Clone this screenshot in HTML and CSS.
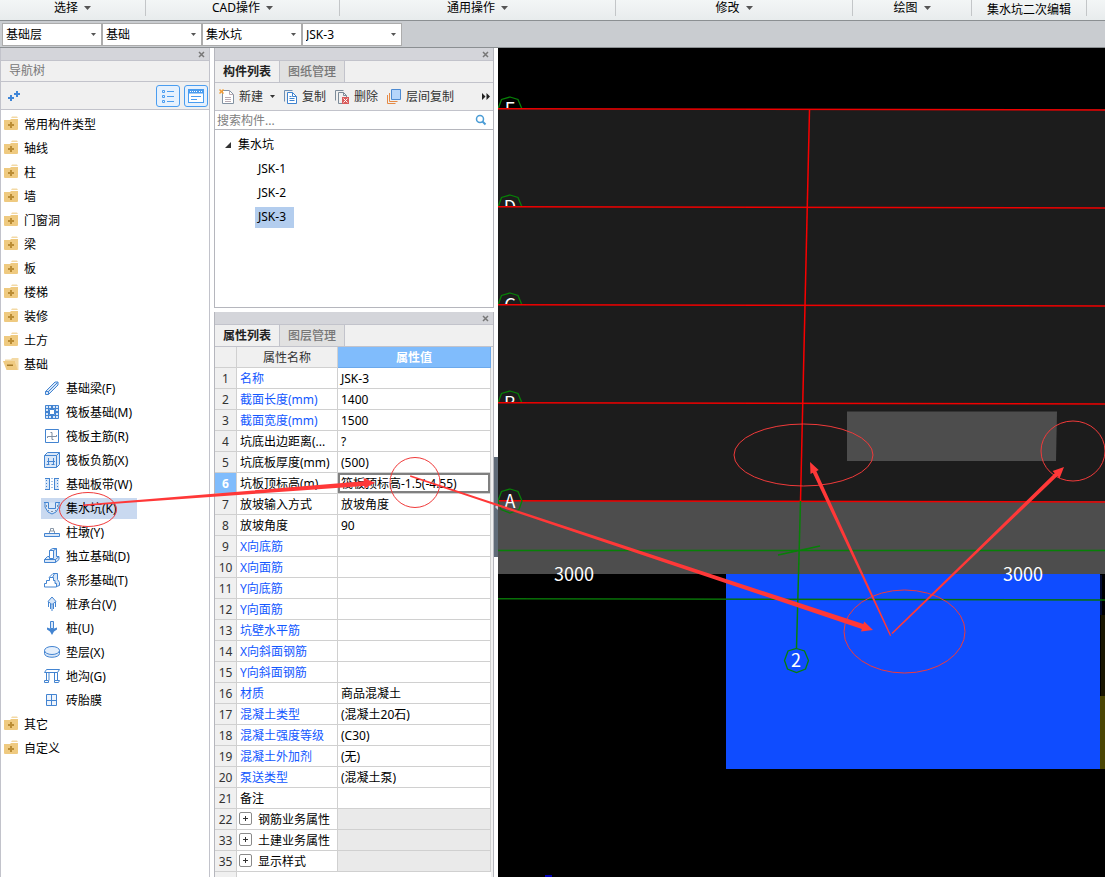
FILE: index.html
```html
<!DOCTYPE html>
<html lang="zh-CN">
<head>
<meta charset="utf-8">
<title>集水坑</title>
<link rel="stylesheet" href="styles.css">
</head>
<body>
<svg class="defs" aria-hidden="true">
  <symbol id="folder" viewBox="0 0 16 16">
    <path d="M8 3l1-1.500h5l1 1.500z" fill="#f3d9a4"/>
    <path d="M1 5h6l1-1h7v10q0 1-1 1h-12q-1 0-1-1z" fill="#efca80"/>
    <path d="M7 7h2v2h2v2h-2v2h-2v-2h-2v-2h2z" fill="#bb8d35"/>
  </symbol>
  <symbol id="folder-open" viewBox="0 0 16 16">
    <path d="M2 4.500h6l1-1.500h6.500v12h-2l-1.500-9h-10z" fill="#f3d9a4"/>
    <path d="M0 6h12l2.500 9h-11z" fill="#efca80"/>
    <path d="M4 9.500h6v1.500h-6z" fill="#a57a28"/>
  </symbol>
  <symbol id="caret" viewBox="0 0 7 4"><path d="M0 0h7l-3.500 4z" fill="currentColor"/></symbol>
  <symbol id="close" viewBox="0 0 7 7"><path d="M1 1l5 5M6 1l-5 5" stroke="#777" stroke-width="1.500" fill="none"/></symbol>
  <symbol id="expand" viewBox="0 0 13 13"><rect x=".5" y=".5" width="12" height="12" rx="1.500" fill="#fff" stroke="#8a8a8a"/><path d="M4 6.500h5M6.500 4v5" stroke="#333"/></symbol>
</svg>

<header class="ribbon">
  <button class="group">选择 <svg class="caret"><use href="#caret"/></svg></button>
  <button class="group">CAD操作 <svg class="caret"><use href="#caret"/></svg></button>
  <button class="group">通用操作 <svg class="caret"><use href="#caret"/></svg></button>
  <button class="group">修改 <svg class="caret"><use href="#caret"/></svg></button>
  <button class="group">绘图 <svg class="caret"><use href="#caret"/></svg></button>
  <button class="group low">集水坑二次编辑</button>
  <span></span>
</header>

<div class="combos">
  <div class="combo"><select aria-label="楼层"><option>基础层</option></select><svg><use href="#caret"/></svg></div>
  <div class="combo"><select aria-label="构件大类"><option>基础</option></select><svg><use href="#caret"/></svg></div>
  <div class="combo"><select aria-label="构件类型"><option>集水坑</option></select><svg><use href="#caret"/></svg></div>
  <div class="combo"><select aria-label="构件"><option>JSK-3</option></select><svg><use href="#caret"/></svg></div>
</div>

<main class="work">
  <aside class="nav">
    <div class="titlebar"><button class="close" aria-label="关闭导航树"><svg><use href="#close"/></svg></button></div>
    <h2 class="nav-title">导航树</h2>
    <div class="nav-tools">
      <button class="plain" aria-label="添加"><svg width="14" height="12" viewBox="0 0 14 12"><path d="M4 5v6M1 8h6M10 1v6M7 4h6" stroke="#3f86d8" stroke-width="2"/></svg></button>
      <span class="spacer"></span>
      <button class="view" aria-label="列表视图"><svg width="16" height="16" viewBox="0 0 16 16" fill="none" stroke="#4a9df0"><path d="M2.500 2.500h2v2h-2zM2.500 7.500h2v2h-2zM2.500 12.500h2v2h-2zM7 3.500h7M7 8.500h7M7 13.500h7"/></svg></button>
      <button class="view" aria-label="面板视图"><svg width="16" height="16" viewBox="0 0 16 16" fill="none" stroke="#4a9df0"><rect x=".5" y="1.500" width="15" height="13" fill="#fff"/><path d="M1 3.500h14" stroke-width="4"/><path d="M2 3.500h7M11 3.500h3" stroke="#fff" stroke-dasharray="1 1"/><path d="M3 8.500h10M3 11.500h6"/></svg></button>
    </div>
    <ul class="tree">
      <li><svg><use href="#folder"/></svg>常用构件类型</li>
      <li><svg><use href="#folder"/></svg>轴线</li>
      <li><svg><use href="#folder"/></svg>柱</li>
      <li><svg><use href="#folder"/></svg>墙</li>
      <li><svg><use href="#folder"/></svg>门窗洞</li>
      <li><svg><use href="#folder"/></svg>梁</li>
      <li><svg><use href="#folder"/></svg>板</li>
      <li><svg><use href="#folder"/></svg>楼梯</li>
      <li><svg><use href="#folder"/></svg>装修</li>
      <li><svg><use href="#folder"/></svg>土方</li>
      <li><svg><use href="#folder-open"/></svg>基础</li>
      <li class="sub"><span><svg viewBox="0 0 16 16"><path d="M1.500 11.500l9.500-9.500h3v3l-9.500 9.500h-3zM1.500 11.500h3v3M4.500 11.500l9-9"/></svg>基础梁(F)</span></li>
      <li class="sub"><span><svg viewBox="0 0 16 16"><path d="M1.500 1.500h13v13h-13z" fill="#d9e7f8"/><path d="M1 4.500h14M1 11.500h14M4.500 1v14M11.500 1v14" fill="none"/><path d="M5.500 5.500h5v5h-5z" fill="#fff"/><path d="M7 3h2M7 13h2M3 7v2M13 7v2" stroke-width="2"/></svg>筏板基础(M)</span></li>
      <li class="sub"><span><svg viewBox="0 0 16 16"><path d="M1.500 1.500h13v13h-13z" fill="#fff"/><path d="M3.500 10v-1.500h9v-1.500M6.500 4.500h1.500v7h1.500" fill="none" stroke="#7f8fa3"/></svg>筏板主筋(R)</span></li>
      <li class="sub"><span><svg viewBox="0 0 16 16"><path d="M.5 3.500l3-3h12v12l-3 3h-12z"/><path d="M.5 3.500h12v12M12.500 3.500l3-3M4.500 6v6M9.500 6v6M2.500 12.500h3M7.500 12.500h3M3 9.500h8" fill="none"/></svg>筏板负筋(X)</span></li>
      <li class="sub"><span><svg viewBox="0 0 16 16"><path d="M1 2h4v11h-4zM11 2h4v11h-4z" stroke="none"/><path d="M1 2.500h4M11 2.500h4M1 13.500h4M11 13.500h4M5.500 2v12M10.500 2v12" fill="none"/><path d="M2.500 4v9M8 2v12M13.500 4v9" fill="none" stroke-dasharray="1 2"/></svg>基础板带(W)</span></li>
      <li class="sub selected"><span><svg viewBox="0 0 16 16"><path d="M0 2.500h4.500v6h7v-6h4.500M1 3v4l3 5l4 2l4-2l3-5v-4" /><path d="M2.500 5v2M4 10.500h1M7 11.500h2M11 10.500h1M13.500 5v2" stroke="#7f8fa3"/></svg>集水坑(K)</span></li>
      <li class="sub"><span><svg viewBox="0 0 16 16"><path d="M.5 9.500h15v3h-15z"/><path d="M5.500 9v-2h5v2M6.500 7v-2.500h3v2.500" fill="#fff" stroke="#8a98a8"/></svg>柱墩(Y)</span></li>
      <li class="sub"><span><svg viewBox="0 0 16 16"><path d="M.5 11.500h11v3h-11zM.5 11.500l3-3h2v-6l3-2h4v8h2.500v3l-3.500 3M5.500 8.500v2h4v-8h-4M9.500 2.500l3-2M11.500 11.500l3.500-3"/></svg>独立基础(D)</span></li>
      <li class="sub"><span><svg viewBox="0 0 16 16"><path d="M8.500 5.500l2-4h3v6l2 3v3l-3 1z"/><path d="M.5 15v-3.500h2v-3h3v-3h4v3h1.500v3h1.500v3.500z" fill="#fff"/><path d="M5 5.500l4-4h4" fill="none"/></svg>条形基础(T)</span></li>
      <li class="sub"><span><svg viewBox="0 0 16 16"><path d="M8 1l4 4.500l-4 3l-4-3zM4.500 6v5M11.500 6v5M6.500 8v5M9.500 8v5M8 9v6"/></svg>桩承台(V)</span></li>
      <li class="sub"><span><svg viewBox="0 0 16 16"><path d="M6.500 1.500h3v7h-3z"/><path d="M3 7.500l3 1h4l3-1v2l-3 2l-2 3.500l-2-3.500l-3-2z" fill="#4384d1" stroke="none"/></svg>桩(U)</span></li>
      <li class="sub"><span><svg viewBox="0 0 16 16"><path d="M.5 6.500v3c0 5 15 5 15 0v-3"/><ellipse cx="8" cy="6.500" rx="7.500" ry="4" fill="#e5effb"/></svg>垫层(X)</span></li>
      <li class="sub"><span><svg viewBox="0 0 16 16"><path d="M.5 4.500l2-3h13l-2 3zM2.500 4.500v8M5 4.500v8M10.500 4.500v8M13.500 4.500v8M.5 14.500v-2h4v2zM10.500 14.500v-2h5l-1 2z" fill="#fff"/></svg>地沟(G)</span></li>
      <li class="sub"><span><svg viewBox="0 0 16 16"><path d="M2.500 2.500h10v11h-10zM7.500 2.500v11M2.500 8.500h10" fill="#eef4fc"/></svg>砖胎膜</span></li>
      <li><svg><use href="#folder"/></svg>其它</li>
      <li><svg><use href="#folder"/></svg>自定义</li>
    </ul>
  </aside>

  <div class="middle">
    <section class="panel list-panel">
      <div class="titlebar"><button class="close" aria-label="关闭构件列表"><svg><use href="#close"/></svg></button></div>
      <div class="tabs"><button class="tab active">构件列表</button><button class="tab">图纸管理</button></div>
      <div class="toolbar">
        <button class="plain new"><svg width="16" height="16" viewBox="0 0 16 16" fill="none"><path d="M3.500 1.500h7l4 4v9h-11z" fill="#fff" stroke="#8292a2"/><path d="M10.500 1.500v4h4M6 8.500h6M6 10.500h6M6 12.500h6" stroke="#b9aab2"/><path d="M1 0l1.500 1.500l1.500-1.500l1 1l-1.500 1.500l1.500 1.500l-1 1l-1.500-1.500l-1.500 1.500l-1-1l1.500-1.500l-1.500-1.500z" fill="#f29b32"/></svg>新建<svg class="mini"><use href="#caret"/></svg></button>
        <button class="plain"><svg width="14" height="16" viewBox="0 0 14 16" fill="none" stroke="#3f83cf"><path d="M8.500 1.500h-8v11" stroke="#6e90b5"/><path d="M3.500 3.500h5l4 4v7h-9z" fill="#fff"/><path d="M8.500 3.500v4h4M5.500 7.500h2M5.500 9.500h5M5.500 11.500h5"/></svg>复制</button>
        <button class="plain"><svg width="15" height="16" viewBox="0 0 15 16" fill="none" stroke="#7c8b99"><path d="M8.500 1.500h-8v10M7 14.500h-3.500v-11h5l3 3v2M8.500 3.500v3h3"/><path d="M7 8h7v7h-7z" fill="#d95c5c" stroke="none"/><path d="M8.500 9.500l4 4M12.500 9.500l-4 4" stroke="#fff"/></svg>删除</button>
        <button class="plain"><svg width="15" height="16" viewBox="0 0 15 16" fill="none"><path d="M.5 6v8.500h8M2.500 4v8.500h8" stroke="#e58a45"/><path d="M4.500.5h9v10h-9z" fill="#b5d5fb" stroke="#4c8ad2"/></svg>层间复制</button>
        <span class="spacer"></span>
        <button class="plain" aria-label="更多"><svg width="8" height="7" viewBox="0 0 8 7"><path d="M0 0l3.500 3.500l-3.500 3.500zM4.500 0l3.500 3.500l-3.500 3.500z" fill="#222"/></svg></button>
      </div>
      <div class="search"><input type="text" placeholder="搜索构件..." aria-label="搜索构件"><svg width="12" height="12" viewBox="0 0 12 12" fill="none" stroke="#4a9cd6" stroke-width="1.500"><circle cx="5" cy="5" r="3.500"/><path d="M7.500 7.500l3 3" stroke-width="2"/></svg></div>
      <ul class="items">
        <li class="root"><svg width="6" height="6" viewBox="0 0 6 6"><path d="M6 0v6h-6z" fill="#333"/></svg>集水坑</li>
        <li><span>JSK-1</span></li>
        <li><span>JSK-2</span></li>
        <li><span class="picked">JSK-3</span></li>
      </ul>
    </section>

    <section class="panel props">
      <div class="titlebar"><button class="close" aria-label="关闭属性列表"><svg><use href="#close"/></svg></button></div>
      <div class="tabs"><button class="tab active">属性列表</button><button class="tab">图层管理</button></div>
      <div class="sheet">
      <table>
        <colgroup><col class="c-num"><col class="c-name"><col></colgroup>
        <thead><tr><th></th><th>属性名称</th><th class="val">属性值</th></tr></thead>
        <tbody>
          <tr><th>1</th><td class="key">名称</td><td>JSK-3</td></tr>
          <tr><th>2</th><td class="key">截面长度(mm)</td><td>1400</td></tr>
          <tr><th>3</th><td class="key">截面宽度(mm)</td><td>1500</td></tr>
          <tr><th>4</th><td>坑底出边距离(...</td><td>?</td></tr>
          <tr><th>5</th><td>坑底板厚度(mm)</td><td>(500)</td></tr>
          <tr class="current"><th>6</th><td>坑板顶标高(m)</td><td>筏板顶标高-1.5(-4.55)</td></tr>
          <tr><th>7</th><td>放坡输入方式</td><td>放坡角度</td></tr>
          <tr><th>8</th><td>放坡角度</td><td>90</td></tr>
          <tr><th>9</th><td class="key">X向底筋</td><td></td></tr>
          <tr><th>10</th><td class="key">X向面筋</td><td></td></tr>
          <tr><th>11</th><td class="key">Y向底筋</td><td></td></tr>
          <tr><th>12</th><td class="key">Y向面筋</td><td></td></tr>
          <tr><th>13</th><td class="key">坑壁水平筋</td><td></td></tr>
          <tr><th>14</th><td class="key">X向斜面钢筋</td><td></td></tr>
          <tr><th>15</th><td class="key">Y向斜面钢筋</td><td></td></tr>
          <tr><th>16</th><td class="key">材质</td><td>商品混凝土</td></tr>
          <tr><th>17</th><td class="key">混凝土类型</td><td>(混凝土20石)</td></tr>
          <tr><th>18</th><td class="key">混凝土强度等级</td><td>(C30)</td></tr>
          <tr><th>19</th><td class="key">混凝土外加剂</td><td>(无)</td></tr>
          <tr><th>20</th><td class="key">泵送类型</td><td>(混凝土泵)</td></tr>
          <tr><th>21</th><td>备注</td><td></td></tr>
          <tr class="fold"><th>22</th><td><button><svg><use href="#expand"/></svg>钢筋业务属性</button></td><td></td></tr>
          <tr class="fold"><th>33</th><td><button><svg><use href="#expand"/></svg>土建业务属性</button></td><td></td></tr>
          <tr class="fold"><th>35</th><td><button><svg><use href="#expand"/></svg>显示样式</button></td><td></td></tr>
        </tbody>
      </table>
      <div class="gutter"></div>
      </div>
    </section>
  </div>

  <div class="splitter"><button aria-label="折叠面板"><svg width="3" height="6" viewBox="0 0 3 6"><path d="M3 0v6l-3-3z" fill="#ccd"/></svg></button></div>

  <section class="canvas">
    <svg class="drawing" role="img" aria-label="轴网平面">
      <defs><polygon id="bubble" points="0,-12 8,-9.500 12,0 9,8.500 0,12 -9,8.500 -12,0 -8.500,-9.500" fill="none" stroke="#078007" stroke-width="1.300"/></defs>
      <g transform="translate(-498 -48)">
        <g class="axis"><use href="#bubble" x="510" y="109"/><text x="510" y="116">E</text></g>
        <rect x="498" y="109" width="2000" height="98" fill="#1c1c1c"/>
        <g class="axis"><use href="#bubble" x="510" y="207"/><text x="510" y="214">D</text></g>
        <rect x="498" y="207" width="2000" height="98" fill="#1c1c1c"/>
        <g class="axis"><use href="#bubble" x="510" y="305"/><text x="510" y="312">C</text></g>
        <rect x="498" y="305" width="2000" height="98" fill="#1c1c1c"/>
        <g class="axis"><use href="#bubble" x="510" y="403"/><text x="510" y="410">B</text></g>
        <rect x="498" y="403" width="2000" height="98" fill="#1c1c1c"/>
        <path d="M847 411.500h210l-1 49.500h-209z" fill="#4d4d4d"/>
        <rect x="498" y="501" width="2000" height="73" fill="#4d4d4d"/>
        <rect x="1101" y="615" width="2000" height="81" fill="#191500"/>
        <rect x="1100" y="696" width="2000" height="73" fill="#4a4503"/>
        <rect x="726" y="574" width="374" height="195" fill="#0f4cff"/>
        <path d="M1101 575v40" stroke="#061766"/>
        <path d="M498 108.800L1105 110M498 206.800L1105 208M498 304.800L1105 306M498 402.800L1105 404M498 500.800L1105 502" stroke="#f00000" stroke-width="1.500"/>
        <path d="M809.500 110L800.500 501" stroke="#f80000" stroke-width="1.500" fill="none"/>
        <path d="M800.500 501L796.500 648M498 550.500H1105M778 555L820 546" stroke="#078007" stroke-width="1.500" fill="none"/>
        <path d="M498 598.800L1105 600" stroke="#087008" stroke-width="1.500"/>
        <path d="M545 876h7" stroke="#0000b8" stroke-width="2"/>
        <g class="axis"><use href="#bubble" x="510" y="501"/><text x="510" y="508">A</text></g>
        <g class="axis"><use href="#bubble" x="796.500" y="660.500"/><text x="796" y="667">2</text></g>
        <g class="axis"><text x="574" y="581">3000</text><text x="1023" y="581">3000</text></g>
      </g>
    </svg>
  </section>
</main>

<svg class="markup" aria-hidden="true">
  <g fill="none" stroke="#f03a3a">
    <ellipse cx="88" cy="509.500" rx="28.500" ry="17"/>
    <circle cx="415" cy="482.500" r="25"/>
    <ellipse cx="803.500" cy="455" rx="69.500" ry="31"/>
    <ellipse cx="1073" cy="451" rx="32" ry="30"/>
    <ellipse cx="904.500" cy="631.500" rx="60.500" ry="41.500"/>
  </g>
  <g fill="#ff3838">
    <path d="M83 504.500L363.800 481.300L363.600 478L375 482.700L364.400 488.600L364.200 485.900L83 506z"/>
    <path d="M410 476.700L861.800 628.900L861 631.600L873 630L864.200 621.500L863.400 624.100L410.400 475.300z"/>
    <path d="M890 636L812.800 472.800L810.500 474L810 462L818.700 470.100L816.400 471.200L891.200 635.500z"/>
    <path d="M891.500 633L1054.700 473.200L1052.600 471L1064 467L1059.600 478.200L1057.500 476L892.500 634z"/>
  </g>
</svg>
</body>
</html>
```

FILE: styles.css
```css
* { box-sizing: border-box; }

body {
  margin: 0;
  height: 100vh;
  display: flex;
  flex-direction: column;
  overflow: hidden;
  background: #fff;
  color: #000;
  font: 12px/20px "Noto Sans", "Noto Sans CJK SC", sans-serif;
}

button, input, select {
  font: inherit;
  color: inherit;
  margin: 0;
  padding: 0;
  border: 0;
  background: none;
}

ul { list-style: none; margin: 0; padding: 0; }
.defs { position: absolute; width: 0; height: 0; }
.spacer { flex: 1; }

/* Ribbon */
.ribbon {
  flex: none;
  display: grid;
  grid-template-columns: 146fr 194fr 276fr 237fr 119fr 115fr 18fr;
  height: 21px;
  padding-bottom: 3px;
  background: linear-gradient(#f3f6f6, #e8eced);
  border-bottom: 1px solid #8b8f92;
}
.group {
  display: flex;
  justify-content: center;
  align-items: center;
  gap: 6px;
  height: 16px;
  line-height: 16px;
  white-space: nowrap;
  border-right: 1px solid #c3c6c8;
}
.group.low { padding-top: 4px; }
.caret { width: 7px; height: 4px; color: #555; }

/* Combo boxes */
.combos {
  flex: none;
  display: flex;
  height: 27px;
  padding: 2px 2px 1px;
  background: #c9ccd0;
  border-bottom: 1px solid #8b8f92;
}
.combo { position: relative; width: 100px; }
.combo select {
  width: 100%;
  height: 23px;
  padding: 0 16px 0 3px;
  appearance: none;
  background: #fff;
  border: 1px solid #acacac;
  border-radius: 0;
}
.combo svg {
  position: absolute;
  right: 6px;
  top: 10px;
  width: 5px;
  height: 3px;
  color: #555;
  pointer-events: none;
}

/* Work area */
.work { flex: 1; min-height: 0; display: flex; }
.titlebar {
  flex: none;
  display: flex;
  justify-content: flex-end;
  align-items: center;
  height: 13px;
  padding-right: 4px;
  background: #d4d5da;
  border-bottom: 1px solid #c2c3cb;
}
.close { display: flex; }
.close svg { width: 7px; height: 7px; }
.plain { display: flex; align-items: center; white-space: nowrap; }

/* Navigation tree */
.nav {
  flex: none;
  width: 210px;
  display: flex;
  flex-direction: column;
  border: solid #c2c3cb;
  border-width: 0 1px;
}
.nav-title {
  margin: 0;
  height: 21px;
  padding-left: 8px;
  font-size: 12px;
  font-weight: 400;
  color: #777;
  background: #f0f0f0;
  border-bottom: 1px solid #c2c3cb;
}
.nav-tools {
  flex: none;
  display: flex;
  align-items: center;
  gap: 4px;
  height: 28px;
  padding: 0 1px 0 6px;
  background: #f0f0f0;
  border-bottom: 1px solid #c2c3cb;
}
.view {
  display: flex;
  align-items: center;
  justify-content: center;
  width: 24px;
  height: 22px;
  background: #e6f1fd;
  border: 1px solid #4a9df0;
  border-radius: 3px;
}
.tree { padding-top: 2px; }
.tree li { display: flex; align-items: center; height: 24px; padding: 2px 0 0 2px; }
.tree li > svg { width: 16px; height: 16px; margin: 0 5px 4px 0; }
.tree .sub { padding: 0 0 0 40px; }
.sub span { display: flex; align-items: center; height: 21px; padding: 2px 20px 0 3px; }
.sub svg {
  width: 16px;
  height: 16px;
  margin: 0 6px 2px 0;
  fill: #d9e7f8;
  stroke: #4384d1;
}
.selected span { background: #c9d9f0; }

/* Middle column */
.middle {
  flex: none;
  width: 280px;
  margin-left: 4px;
  display: flex;
  flex-direction: column;
  gap: 4px;
}
.panel { display: flex; flex-direction: column; border: 1px solid #b5b6bd; border-top: 0; }
.list-panel { flex: none; height: 260px; }
.props { flex: 1; min-height: 0; border-bottom: 0; background: #f0f0f0; }
.tabs {
  flex: none;
  display: flex;
  height: 22px;
  background: #f0f0f0;
  border-bottom: 1px solid #c2c3cb;
}
.tab {
  padding: 0 8px;
  color: #777;
  font-weight: 500;
  background: #e1e1e1;
  border-right: 1px solid #c2c3cb;
}
.tab.active { color: #222; font-weight: 700; background: #f0f0f0; }
.toolbar {
  flex: none;
  display: flex;
  align-items: center;
  gap: 9px;
  height: 28px;
  padding: 0 3px 0 4px;
  color: #333;
  background: #f0f0f0;
  border-bottom: 1px solid #c2c3cb;
}
.toolbar .plain { gap: 4px; }
.toolbar .mini { width: 5px; height: 3px; margin-left: 3px; }
.search { flex: none; display: flex; align-items: center; height: 19px; padding: 0 6px 0 2px; border-bottom: 1px solid #b5b6bd; }
.search input { flex: 1; min-width: 0; height: 18px; padding-top: 2px; outline: 0; }
.search input::placeholder { color: #808080; opacity: 1; }
.items { padding-top: 3px; }
.items li { display: flex; align-items: center; height: 24px; padding-left: 40px; }
.items .root { padding-left: 10px; gap: 7px; }
.items span { padding: 0 8px 1px 3px; }
.items .picked { background: #b3cdee; }

/* Property table */
.sheet { flex: 1; display: flex; flex-direction: column; min-height: 0; background: #fff; overflow: hidden; border-right: 2px solid #f0f0f0; }
table { width: 100%; table-layout: fixed; border-collapse: separate; border-spacing: 0; }
.c-num { width: 22px; }
.c-name { width: 101px; }
th, td {
  height: 21px;
  padding: 2px 3px 0;
  line-height: 18px;
  text-align: left;
  font-weight: 400;
  white-space: nowrap;
  overflow: hidden;
  background: #fff;
  border: solid #d0d0d0;
  border-width: 0 1px 1px 0;
}
th { text-align: center; padding: 2px 0 0; color: #333; background: #f0f0f0; }
thead .val { color: #fff; font-weight: 700; background: #80bcfc; border-color: #6ba9ec; }
.key { color: #1257ff; }
.current th { color: #fff; font-weight: 700; background: #80bcfc; }
.current td:last-child { box-shadow: inset 0 0 0 2px #808080; }
.fold td { padding-left: 2px; }
.fold td:last-child { background: #eaeaea; }
.fold button { display: flex; align-items: center; height: 18px; gap: 6px; }
.fold svg { width: 13px; height: 13px; margin-bottom: 3px; }
.gutter { flex: 1; width: 22px; background: #f0f0f0; border-right: 1px solid #d0d0d0; }

.splitter { flex: none; width: 4px; display: flex; flex-direction: column; padding-top: 409px; }
.splitter button { display: flex; align-items: center; justify-content: flex-end; height: 100px; background: #606b78; }

/* Drawing canvas */
.canvas { flex: 1; min-width: 0; background: #000; overflow: hidden; }
.drawing { display: block; width: 100%; height: 100%; }
.axis text {
  fill: #fff;
  font: 18px "Noto Sans CJK SC", sans-serif;
  text-anchor: middle;
}

/* Review arrows and rings drawn over the whole window */
.markup {
  position: absolute;
  left: 0;
  top: 0;
  width: 100%;
  height: 100%;
  pointer-events: none;
}
```
